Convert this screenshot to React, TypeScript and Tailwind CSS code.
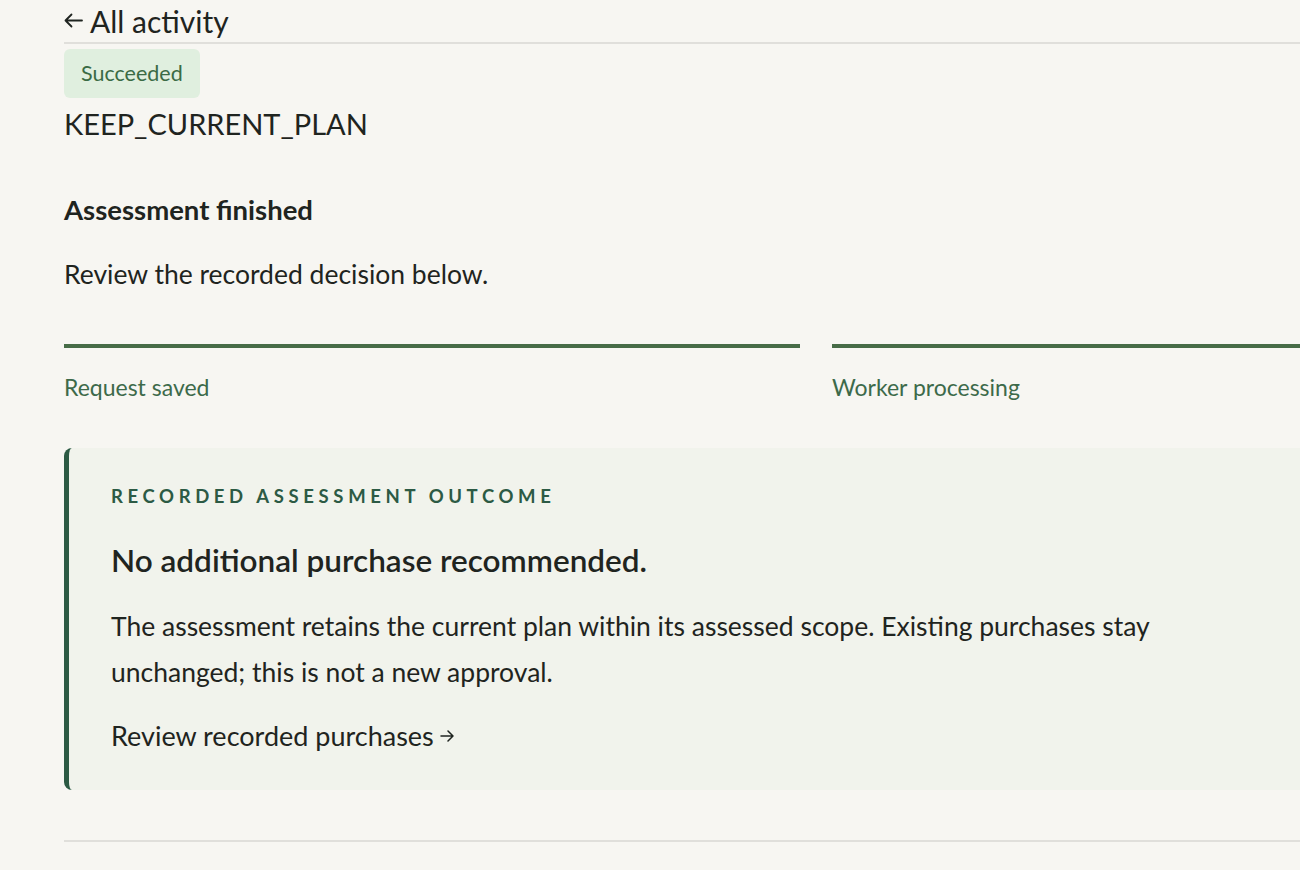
import React from "react";

const steps = [
  { label: "Request saved" },
  { label: "Worker processing" },
];

function ArrowLeft() {
  return (
    <svg width="19" height="15" viewBox="0 0 19 15" fill="none" stroke="currentColor" strokeWidth="1.8" strokeLinecap="round" strokeLinejoin="round">
      <path d="M18 7.5H1.5M7.5 1.5L1.5 7.5L7.5 13.5" />
    </svg>
  );
}

function ArrowRight() {
  return (
    <svg width="14" height="12" viewBox="0 0 14 12" fill="none" stroke="currentColor" strokeWidth="1.5" strokeLinecap="round" strokeLinejoin="round">
      <path d="M1 6H13M8 1L13 6L8 11" />
    </svg>
  );
}

export default function App() {
  return (
    <div
      className="w-full min-h-[870px] overflow-hidden bg-[#f7f6f2] text-[#1f2420]"
      style={{ fontFamily: "Lato, 'Noto Sans', sans-serif" }}
    >
      <main className="pl-16 w-[1568px]">
        {/* Back link */}
        <div className="h-[44px] border-b-2 border-[#e0dfdb]">
          <a href="#" className="flex items-center gap-[7px] h-[40px] pt-[1px] text-[30px] leading-[40px] text-[#1f2420]">
            <ArrowLeft />
            <span>All activity</span>
          </a>
        </div>

        {/* Status */}
        <div className="mt-[5px] inline-flex h-[49px] items-center rounded-md bg-[#e0efdf] px-[17px] text-[21.5px] text-[#3b6b45]">
          Succeeded
        </div>
        <h1 className="mt-[6px] text-[29px] leading-[40px] font-normal">KEEP_CURRENT_PLAN</h1>

        <h2 className="mt-[48px] text-[27.5px] leading-[36px] font-bold">Assessment finished</h2>
        <p className="mt-[28px] text-[26.5px] leading-[36px]">Review the recorded decision below.</p>

        {/* Progress */}
        <div className="mt-[52px] grid grid-cols-2 gap-8">
          {steps.map((s) => (
            <div key={s.label} className="border-t-4 border-[#476c47]">
              <div className="mt-[23px] text-[23px] leading-[32px] text-[#3d6a4a]">{s.label}</div>
            </div>
          ))}
        </div>

        {/* Outcome card */}
        <section className="mt-[45px] rounded-l-lg border-l-[5px] border-[#2c5a44] bg-[#f1f3ec] pl-[42px] pt-[35px] pb-[34px]">
          <div className="text-[18.5px] leading-[26px] font-bold uppercase tracking-[0.25em] text-[#2c5a44]">
            Recorded assessment outcome
          </div>
          <h3 className="mt-[31px] text-[31.5px] leading-[40px] font-semibold">
            No additional purchase recommended.
          </h3>
          <p className="mt-[23px] max-w-[1080px] text-[26.5px] leading-[46px]">
            The assessment retains the current plan within its assessed scope. Existing purchases stay
            unchanged; this is not a new approval.
          </p>
          <a href="#" className="mt-[21px] flex items-center gap-[6px] text-[27px] leading-[40px] text-[#1f2420]">
            <span>Review recorded purchases</span>
            <ArrowRight />
          </a>
        </section>

        <div className="mt-[50px] border-t-2 border-[#e0dfdb]" />
      </main>
    </div>
  );
}
